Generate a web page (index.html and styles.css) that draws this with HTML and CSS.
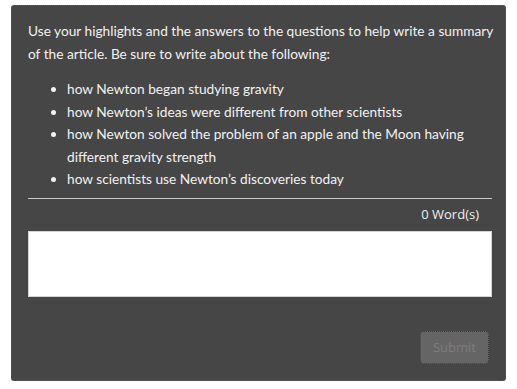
FILE: index.html
```html
<!DOCTYPE html>
<html lang="en">
<head>
  <meta charset="UTF-8">
  <title>Summary</title>
  <link rel="stylesheet" href="styles.css">
</head>
<body>
  <!-- Writing prompt panel -->
  <div class="prompt-box">
    <p class="prompt-text">Use your highlights and the answers to the questions to help write a summary of the article. Be sure to write about the following:</p>
    <ul class="prompt-list">
      <li>how Newton began studying gravity</li>
      <li>how Newton’s ideas were different from other scientists</li>
      <li>how Newton solved the problem of an apple and the Moon having different gravity strength</li>
      <li>how scientists use Newton’s discoveries today</li>
    </ul>
    <hr class="divider">
    <div class="word-count">0 Word(s)</div>
    <textarea class="answer"></textarea>
    <div class="actions">
      <button class="submit-btn" disabled>Submit</button>
    </div>
  </div>
</body>
</html>
```

FILE: styles.css
```css
/* General Styles */
body {
  margin: 0;
  background-color: #ffffff;
  font-family: Lato, "Open Sans", sans-serif;
}

.prompt-box {
  margin: 5px 0 0 11px;
  width: 495px;
  box-sizing: border-box;
  padding: 14px 13px 16px 16px;
  background-color: #464646;
  border: 1px dotted #5a5a5a;
  border-radius: 3px;
  color: #f2f2f2;
}

.prompt-text {
  margin: 0 -8px 0 0;
  font-size: 13.7px;
  line-height: 22.5px;
}

.prompt-list {
  margin: 13px -8px 0 0;
  padding-left: 39px;
  font-size: 13.7px;
  line-height: 22.5px;
}

.divider {
  margin: 7px 0 0;
  border: none;
  border-top: 1px solid #c8c8c8;
}

/* Word count + answer box */
.word-count {
  margin-top: 6px;
  padding-right: 13px;
  text-align: right;
  font-family: "Open Sans", sans-serif;
  font-size: 13px;
  line-height: 18px;
  color: #f0f0f0;
}

.answer {
  display: block;
  width: 100%;
  height: 66px;
  margin-top: 8px;
  box-sizing: border-box;
  border: 1px solid #d4d4d4;
  background-color: #ffffff;
  resize: none;
}

.actions {
  display: flex;
  justify-content: flex-end;
  margin-top: 34px;
  padding-right: 3px;
}

.submit-btn {
  width: 69px;
  height: 33px;
  background-color: #656565;
  color: #7e7e7e;
  border: 1px dotted #3a3a3a;
  border-radius: 4px;
  font-family: "Open Sans", sans-serif;
  font-size: 13px;
}
```
